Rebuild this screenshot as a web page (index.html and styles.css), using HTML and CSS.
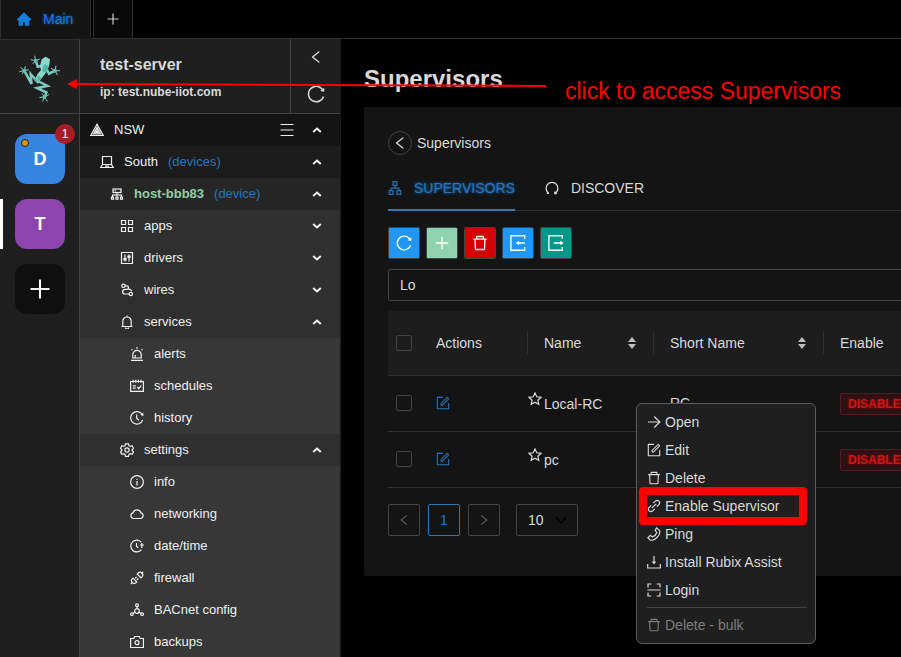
FILE: index.html
```html
<!DOCTYPE html>
<html lang="en">
<head>
<meta charset="utf-8">
<title>Supervisors</title>
<link rel="stylesheet" href="styles.css">
</head>
<body>
<svg class="sprite" aria-hidden="true">
  <symbol id="home" viewBox="64 64 896 896"><path fill="currentColor" d="M946.5 505L534.6 93.4a31.93 31.93 0 00-45.2 0L77.5 505c-12 12-18.8 28.3-18.8 45.3 0 35.3 28.7 64 64 64h43.4V908c0 17.7 14.3 32 32 32H448V716h112v224h265.9c17.7 0 32-14.3 32-32V614.3h43.4c17 0 33.3-6.7 45.3-18.8 24.9-25 24.9-65.5-.1-90.5z"/></symbol>
  <symbol id="plus" viewBox="0 0 14 14"><path d="M7 1.500v11M1.500 7h11"/></symbol>
  <symbol id="left" viewBox="64 64 896 896"><path fill="currentColor" d="M724 218.300V141c0-6.700-7.700-10.400-12.900-6.300L260.300 486.800a31.860 31.860 0 000 50.300l450.800 352.100c5.300 4.100 12.900.4 12.900-6.300v-77.300c0-4.900-2.300-9.600-6.100-12.600l-360-281 360-281.100c3.800-3 6.100-7.700 6.100-12.600z"/></symbol>
  <symbol id="reload" viewBox="64 64 896 896"><path fill="currentColor" d="M909.1 209.3l-56.4 44.1C775.8 155.1 656.2 92 521.9 92 290 92 102.3 279.5 102 511.5 101.7 743.7 289.8 932 521.9 932c181.3 0 335.8-115 394.6-276.1 1.5-4.2-.7-8.9-4.9-10.3l-56.7-19.5a8 8 0 00-10.1 4.8c-1.8 5-3.8 10-5.9 14.900-17.300 41-42.100 77.800-73.700 109.400A344.770 344.770 0 01655.900 829c-42.300 17.900-87.400 27-133.800 27-46.500 0-91.500-9.100-133.800-27A341.500 341.500 0 01279 755.200a342.160 342.160 0 01-73.700-109.400c-17.900-42.400-27-87.400-27-133.900s9.100-91.500 27-133.900c17.300-41 42.100-77.800 73.700-109.400 31.600-31.600 68.400-56.400 109.300-73.800 42.300-17.900 87.400-27 133.800-27 46.500 0 91.500 9.100 133.800 27a341.500 341.500 0 01109.300 73.800c9.900 9.900 19.200 20.400 27.800 31.400l-60.200 47a8 8 0 003 14.100l175.600 43c5 1.200 9.900-2.600 9.900-7.700l.8-180.900c-.1-6.600-7.800-10.300-13-6.200z"/></symbol>
  <symbol id="trash" viewBox="64 64 896 896"><path fill="currentColor" d="M360 184h-8c4.400 0 8-3.600 8-8v8h304v-8c0 4.400 3.600 8 8 8h-8v72h72v-80c0-35.300-28.700-64-64-64H352c-35.300 0-64 28.700-64 64v80h72v-72zm504 72H160c-17.700 0-32 14.300-32 32v32c0 4.400 3.600 8 8 8h60.400l24.700 523c1.600 34.100 29.800 61 63.900 61h454c34.200 0 62.300-26.800 63.900-61l24.700-523H888c4.400 0 8-3.600 8-8v-32c0-17.700-14.300-32-32-32zM731.300 840H292.700l-24.200-512h487l-24.200 512z"/></symbol>
  <symbol id="edit" viewBox="64 64 896 896"><path fill="currentColor" d="M904 512h-56c-4.400 0-8 3.600-8 8v320H184V184h320c4.400 0 8-3.600 8-8v-56c0-4.400-3.600-8-8-8H144c-17.700 0-32 14.300-32 32v736c0 17.700 14.300 32 32 32h736c17.700 0 32-14.300 32-32V520c0-4.400-3.600-8-8-8z"/><path fill="currentColor" d="M355.900 534.900L354 653.800c-.1 8.900 7.100 16.200 16 16.200h.4l118-2.900c2-.1 4-.9 5.400-2.300l415.900-415c3.100-3.100 3.100-8.200 0-11.300L785.400 114.300c-1.600-1.600-3.600-2.300-5.700-2.300s-4.100.8-5.700 2.300l-415.800 415a8.300 8.300 0 00-2.300 5.600zm63.500 23.600L779.700 199l45.200 45.100-360.500 359.700-45.700 1.100.7-46.400z"/></symbol>
  <symbol id="apartment" viewBox="64 64 896 896"><path fill="currentColor" d="M908 640H804V488c0-4.400-3.600-8-8-8H548v-96h108c8.800 0 16-7.200 16-16V80c0-8.800-7.200-16-16-16H368c-8.800 0-16 7.200-16 16v288c0 8.800 7.200 16 16 16h108v96H228c-4.400 0-8 3.600-8 8v152H116c-8.800 0-16 7.200-16 16v288c0 8.800 7.200 16 16 16h288c8.800 0 16-7.200 16-16V656c0-8.800-7.200-16-16-16H292v-88h440v88H620c-8.800 0-16 7.200-16 16v288c0 8.800 7.200 16 16 16h288c8.800 0 16-7.200 16-16V656c0-8.800-7.200-16-16-16zm-564 76v168H176V716h168zm84-408V140h168v168H428zm420 576H680V716h168v168z"/></symbol>
  <symbol id="cluster" viewBox="64 64 896 896"><path fill="currentColor" stroke="currentColor" stroke-width="14" fill-rule="evenodd" d="M888 680h-54V540H546v-92h238c8.800 0 16-7.200 16-16V168c0-8.800-7.200-16-16-16H240c-8.800 0-16 7.200-16 16v264c0 8.800 7.200 16 16 16h238v92H190v140h-54c-4.400 0-8 3.600-8 8v176c0 4.400 3.600 8 8 8h176c4.400 0 8-3.600 8-8V688c0-4.400-3.600-8-8-8h-54v-72h220v72h-54c-4.400 0-8 3.600-8 8v176c0 4.400 3.600 8 8 8h176c4.400 0 8-3.600 8-8V688c0-4.400-3.600-8-8-8h-54v-72h220v72h-54c-4.400 0-8 3.600-8 8v176c0 4.400 3.600 8 8 8h176c4.400 0 8-3.600 8-8V688c0-4.400-3.600-8-8-8zM256 808h-64v-64h64zM544 808h-64v-64h64zM832 808h-64v-64h64zM296 376V224h432v152zM370 268h70v64h-70z"/></symbol>
  <symbol id="pyramid" viewBox="0 0 14 14"><path d="M7 1.200L13.300 12.500H.7zM7 4.400L10.600 10.800H3.400zM7 7.200L8.300 9.500H5.700z"/></symbol>
  <symbol id="laptop" viewBox="0 0 14 14"><path d="M2.500 9.500v-8h9v8M2.500 9.500h9l1.800 3H.7zM5 11.200h4"/></symbol>
  <symbol id="apps" viewBox="0 0 14 14"><path d="M1.500 1.500h4v4h-4zM8.500 1.500h4v4h-4zM1.500 8.500h4v4h-4zM8.500 8.500h4v4h-4z"/></symbol>
  <symbol id="control" viewBox="0 0 14 14"><path d="M1.500 1.500h11v11h-11zM5 3.500v7M9 3.500v7"/><path fill="currentColor" d="M4 7.500h2v1.500H4zM8 5h2v1.500H8z"/></symbol>
  <symbol id="wires" viewBox="0 0 14 14"><circle cx="3.500" cy="2.800" r="1.700"/><circle cx="10.800" cy="11" r="1.700"/><path d="M5.200 2.800h1.500a1.800 1.800 0 010 3.600H4.900a2.300 2.300 0 000 4.600h4.200M8.500 6.400h1.300a1.500 1.500 0 011.500 2"/></symbol>
  <symbol id="bell" viewBox="0 0 14 14"><path d="M1.500 11.500h11M2.800 11.500V6.200a4.200 4.200 0 018.400 0v5.300M7 .4V2M5.500 12.600a1.500 1.500 0 003 0"/></symbol>
  <symbol id="alert" viewBox="0 0 14 14"><path d="M1 13.300h12M2.800 11V7.600a4.200 4.200 0 018.400 0V11zM5.200 11V8M7 0v1.700M1.500 2.200l1 1M12.500 2.200l-1 1"/></symbol>
  <symbol id="schedule" viewBox="0 0 14 14"><path d="M.6 2.500h12.800v9.900H.6zM3.200.7v3M5.800.7v3M8.400.7v3M11 .7v3M2.800 6.800h3M2.800 9.200h3M7.300 8l1.500 1.700 2.500-3.200"/></symbol>
  <symbol id="history" viewBox="0 0 14 14"><path d="M12.100 3.500A6.200 6.200 0 1012.700 9M6.700 3.600v3.900l2.300 1.700"/><path fill="currentColor" stroke="none" d="M13.400 1.500v3.400l-3-.8z"/></symbol>
  <symbol id="gear" viewBox="0 0 14 14"><path d="M5.500.8h3l.5 1.900 1.200.7 1.900-.6 1.400 2.500L12.100 6.700v.8l1.400 1.300-1.400 2.500-1.900-.6-1.200.7-.5 1.900h-3L5 11.400l-1.200-.7-1.900.6L.5 8.800l1.400-1.300v-.8L.5 5.300l1.400-2.500 1.900.6L5 2.700z"/><circle cx="7" cy="7" r="2.100"/></symbol>
  <symbol id="info" viewBox="0 0 14 14"><circle cx="7" cy="7" r="6.400"/><path d="M7 6.100v4.300M7 3.700v1.200"/></symbol>
  <symbol id="cloud" viewBox="0 0 14 14"><path d="M3.500 11.500a2.900 2.900 0 01-.4-5.700 4.100 4.100 0 017.800 0 2.900 2.900 0 01-.4 5.700z"/></symbol>
  <symbol id="clock" viewBox="0 0 14 14"><path d="M11.200 3.200a5.900 5.900 0 10.200 7.400M6.500 4v3.300l1.700 1.500M10 6H14M11.800 4v5"/></symbol>
  <symbol id="plug" viewBox="0 0 14 14"><path d="M.8 13.200l2-2M11.200 2.800l2-2M3 7.200l3.800 3.800-1.300 1a2.700 2.700 0 01-3.700-3.700zM7.200 3l3.800 3.800 1.200-1.200a2.700 2.700 0 00-3.800-3.800zM5.100 7.300l1.500-1.500M6.800 9l1.500-1.500"/></symbol>
  <symbol id="network" viewBox="0 0 14 14"><circle cx="7" cy="2.200" r="1.400"/><circle cx="1.900" cy="11.200" r="1.300"/><circle cx="12.100" cy="11.200" r="1.300"/><circle cx="7" cy="8" r="2.300"/><path d="M7 3.600v2M3 10.400l2-1.100M11 10.400l-2-1.100"/></symbol>
  <symbol id="camera" viewBox="0 0 14 14"><path d="M.6 3.500h3.200l.9-2h4.600l.9 2h3.200v9H.6z"/><circle cx="7" cy="7.700" r="2"/></symbol>
  <symbol id="up" viewBox="0 0 12 12"><path stroke-width="2" d="M2.200 8L6 4.500 9.800 8"/></symbol>
  <symbol id="down" viewBox="0 0 12 12"><path stroke-width="2" d="M2.200 4L6 7.500 9.800 4"/></symbol>
  <symbol id="bars" viewBox="0 0 14 14"><path d="M.5 1.500h13M.5 7h13M.5 12.500h13"/></symbol>
  <symbol id="redo" viewBox="0 0 14 14"><path stroke-width="1.300" d="M3.700 12.200a5.900 5.900 0 116.600 0M1.800 12.300h2.200M9.800 10.500v2h2"/></symbol>
  <symbol id="import" viewBox="0 0 14 14"><path d="M12.900 3.500V.7H.8v12.600h12.100v-2.800M6.500 7H13"/><path fill="currentColor" stroke="none" d="M5 7l3-2v4z"/></symbol>
  <symbol id="export" viewBox="0 0 14 14"><path d="M12.500 3.500V.7H.8v12.600h11.700v-2.800M5 7h6.500"/><path fill="currentColor" stroke="none" d="M13.800 7l-3-2v4z"/></symbol>
  <symbol id="star" viewBox="0 0 14 14"><path d="M7 .9l1.800 3.900 4.300.5-3.200 2.900.9 4.200L7 10.300l-3.800 2.100.9-4.200L.9 5.300l4.300-.5z"/></symbol>
  <symbol id="arrow" viewBox="0 0 14 14"><path d="M1 7h11.500M7.300 1.500L12.800 7l-5.500 5.500"/></symbol>
  <symbol id="link" viewBox="0 0 14 14"><path d="M6.300 4.200l2.300-2.300a2.500 2.500 0 013.500 3.500L9.800 7.700M7.700 9.800l-2.300 2.300a2.500 2.500 0 01-3.500-3.500l2.300-2.300M4.800 9.200l4.400-4.400"/></symbol>
  <symbol id="phone" viewBox="0 0 14 14"><path d="M9.600.9l3 2.700c.8 2.200-.6 5-2.900 7.200-2 1.900-4.600 2.800-6.600 2.200L.8 10.800l2.600-2.400 2 1.500c2.200-.8 3.800-2.400 4.400-4.400L8.200 3.300z"/></symbol>
  <symbol id="download" viewBox="0 0 14 14"><path d="M.7 9v4h12.600V9M7 .9V8"/><path fill="currentColor" stroke="none" d="M4.800 6.500h4.400L7 9.600z"/></symbol>
  <symbol id="scan" viewBox="0 0 14 14"><path d="M.5 7h13M1 4.500V1h3.300M9.700 1H13v3.500M1 9.500V13h3.300M9.700 13H13V9.500"/></symbol>
</svg>

<div class="app">
  <nav class="tabs" aria-label="Windows">
    <a class="tab tab-active" href="#main"><svg class="icon"><use href="#home"/></svg>Main</a>
    <button class="tab tab-add" aria-label="New tab"><svg class="icon"><use href="#plus"/></svg></button>
  </nav>

  <div class="body">
    <aside class="rail">
      <a class="logo" href="#supervisors" aria-label="Supervisors">
        <svg class="frog" viewBox="0 0 42 50">
          <g class="limbs"><path d="M16.700 6.700l2 6 5-1M36 16.700l-6 3-2-4M5.300 16.700L12.500 30l-.8-10 8 9"/><path d="M17 26l11.500 6L18 34l9.500 4.500-2 5"/></g>
          <path class="light" d="M22.700 5.300l4-2.600L31 5.300 30.300 11l-2.600 6.700-5 6.600-4 5L15.500 26l3-6 3.500-4-1-4z"/>
          <path class="mid" d="M25 10l5 2-3 7-4-2zM18.500 21l4 3-4 5zM14 25l3-1 1 5z"/>
          <g class="toes"><path d="M16.700 6.700l-1-5M16.700 6.700l-5-1M16.700 6.700l-3 3M16.700 6.700l4-1.700M5.300 16.700l-4-3.500M5.300 16.700l1-4.500M5.300 16.700l-5 1M5.300 16.700l4.500-1M5.300 16.700L3 20M36 16.700l1-5M36 16.700l5 0M36 16.700l2.500 4.500M36 16.700l-4-2.500M25.500 43l-5 .5M25.500 43l-2 4.500M25.500 43l3 4.500M25.500 43l4.500-2.500M25.500 43L23 39.500"/></g>
          <g class="palms"><circle cx="16.700" cy="6.700" r="2"/><circle cx="5.300" cy="16.700" r="2"/><circle cx="36" cy="16.700" r="2"/><circle cx="25.500" cy="43" r="2"/></g>
        </svg>
      </a>
      <div class="workspaces">
        <button class="space space-d">D<span class="dot"></span><span class="count">1</span></button>
        <button class="space space-t">T</button>
        <button class="space space-add" aria-label="Add workspace"><svg><use href="#plus"/></svg></button>
      </div>
    </aside>

    <aside class="sidebar">
      <header class="server">
        <div class="server-name"><h2>test-server</h2><p>ip: test.nube-iiot.com</p></div>
        <div class="server-tools">
          <button aria-label="Collapse"><svg class="icon"><use href="#left"/></svg></button>
          <button aria-label="Reload"><svg class="icon large"><use href="#reload"/></svg></button>
        </div>
      </header>
      <nav class="tree" aria-label="Devices">
        <a class="node l0" href="#nsw"><svg class="icon"><use href="#pyramid"/></svg><span>NSW</span><svg class="icon list"><use href="#bars"/></svg><svg class="chevron"><use href="#up"/></svg></a>
        <a class="node l1" href="#south"><svg class="icon"><use href="#laptop"/></svg><span>South</span><small>(devices)</small><svg class="chevron"><use href="#up"/></svg></a>
        <a class="node l2" href="#host"><svg class="icon"><use href="#cluster"/></svg><b>host-bbb83</b><small>(device)</small><svg class="chevron"><use href="#up"/></svg></a>
        <a class="node l3" href="#apps"><svg class="icon"><use href="#apps"/></svg><span>apps</span><svg class="chevron"><use href="#down"/></svg></a>
        <a class="node l3" href="#drivers"><svg class="icon"><use href="#control"/></svg><span>drivers</span><svg class="chevron"><use href="#down"/></svg></a>
        <a class="node l3" href="#wires"><svg class="icon"><use href="#wires"/></svg><span>wires</span><svg class="chevron"><use href="#down"/></svg></a>
        <a class="node l3" href="#services"><svg class="icon"><use href="#bell"/></svg><span>services</span><svg class="chevron"><use href="#up"/></svg></a>
        <a class="node l4" href="#alerts"><svg class="icon"><use href="#alert"/></svg><span>alerts</span></a>
        <a class="node l4" href="#schedules"><svg class="icon"><use href="#schedule"/></svg><span>schedules</span></a>
        <a class="node l4" href="#history"><svg class="icon"><use href="#history"/></svg><span>history</span></a>
        <a class="node l3" href="#settings"><svg class="icon"><use href="#gear"/></svg><span>settings</span><svg class="chevron"><use href="#up"/></svg></a>
        <a class="node l4" href="#info"><svg class="icon"><use href="#info"/></svg><span>info</span></a>
        <a class="node l4" href="#networking"><svg class="icon"><use href="#cloud"/></svg><span>networking</span></a>
        <a class="node l4" href="#datetime"><svg class="icon"><use href="#clock"/></svg><span>date/time</span></a>
        <a class="node l4" href="#firewall"><svg class="icon"><use href="#plug"/></svg><span>firewall</span></a>
        <a class="node l4" href="#bacnet"><svg class="icon"><use href="#network"/></svg><span>BACnet config</span></a>
        <a class="node l4" href="#backups"><svg class="icon"><use href="#camera"/></svg><span>backups</span></a>
      </nav>
    </aside>

    <main class="main">
      <h1>Supervisors</h1>
      <section class="card">
        <div class="back"><button aria-label="Back"><svg class="icon"><use href="#left"/></svg></button>Supervisors</div>
        <div class="views">
          <a class="view view-active" href="#list"><svg class="icon"><use href="#apartment"/></svg>SUPERVISORS</a>
          <a class="view" href="#discover"><svg class="icon"><use href="#redo"/></svg>DISCOVER</a>
        </div>
        <div class="actions">
          <button class="blue" aria-label="Refresh"><svg class="icon"><use href="#reload"/></svg></button>
          <button class="green" aria-label="Add"><svg class="icon"><use href="#plus"/></svg></button>
          <button class="red" aria-label="Delete"><svg class="icon"><use href="#trash"/></svg></button>
          <button class="blue" aria-label="Import"><svg class="icon"><use href="#import"/></svg></button>
          <button class="teal" aria-label="Export"><svg class="icon"><use href="#export"/></svg></button>
        </div>
        <input class="search" type="text" value="Lo" aria-label="Search supervisors">
        <table>
          <colgroup><col class="c-check"><col class="c-actions"><col class="c-name"><col class="c-short"><col></colgroup>
          <thead><tr>
            <th class="check"><input type="checkbox" aria-label="Select all"></th>
            <th><div class="head">Actions</div></th>
            <th><div class="head">Name<svg class="sorter" viewBox="0 0 8 12"><path d="M4 0l4 5H0zM4 12l4-5H0z"/></svg></div></th>
            <th><div class="head">Short Name<svg class="sorter" viewBox="0 0 8 12"><path d="M4 0l4 5H0zM4 12l4-5H0z"/></svg></div></th>
            <th><div class="head">Enable</div></th>
          </tr></thead>
          <tbody>
            <tr>
              <td class="check"><input type="checkbox" aria-label="Select Local-RC"></td>
              <td><button class="row-edit" aria-label="Edit Local-RC"><svg class="icon"><use href="#edit"/></svg></button></td>
              <td class="name"><div><svg class="icon"><use href="#star"/></svg><span>Local-RC</span></div></td>
              <td>RC</td>
              <td><span class="tag">DISABLED</span></td>
            </tr>
            <tr>
              <td class="check"><input type="checkbox" aria-label="Select pc"></td>
              <td><button class="row-edit" aria-label="Edit pc"><svg class="icon"><use href="#edit"/></svg></button></td>
              <td class="name"><div><svg class="icon"><use href="#star"/></svg><span>pc</span></div></td>
              <td></td>
              <td><span class="tag">DISABLED</span></td>
            </tr>
          </tbody>
        </table>
        <div class="pages">
          <button class="page" aria-label="Previous"><svg class="small"><use href="#left"/></svg></button>
          <button class="page page-active">1</button>
          <button class="page" aria-label="Next"><svg class="small flip"><use href="#left"/></svg></button>
          <div class="size"><select aria-label="Rows per page"><option>10</option></select><svg class="size-arrow" viewBox="0 0 12 12"><path d="M1 3l5 6 5-6"/></svg></div>
        </div>
      </section>
    </main>
  </div>

  <div class="menu" role="menu">
    <button role="menuitem"><svg class="icon"><use href="#arrow"/></svg>Open</button>
    <button role="menuitem"><svg class="icon"><use href="#edit"/></svg>Edit</button>
    <button role="menuitem"><svg class="icon"><use href="#trash"/></svg>Delete</button>
    <button role="menuitem"><svg class="icon"><use href="#link"/></svg>Enable Supervisor</button>
    <button role="menuitem"><svg class="icon"><use href="#phone"/></svg>Ping</button>
    <button role="menuitem"><svg class="icon"><use href="#download"/></svg>Install Rubix Assist</button>
    <button role="menuitem"><svg class="icon"><use href="#scan"/></svg>Login</button>
    <hr>
    <button role="menuitem" disabled><svg class="icon"><use href="#trash"/></svg>Delete - bulk</button>
  </div>

  <svg class="pointer" viewBox="0 0 480 12"><path class="shaft" d="M9 5L479 7"/><path class="tip" d="M0 5L10 0V10z"/></svg>
  <p class="note">click to access Supervisors</p>
  <div class="highlight"></div>
</div>
</body>
</html>
```
FILE: styles.css
```css
* { box-sizing: border-box; }
body {
  margin: 0;
  background: #000;
  color: #dadada;
  font: 14px/22px "Liberation Sans", Arial, sans-serif;
}
h1, h2, p { margin: 0; }
a { color: inherit; text-decoration: none; }
button { margin: 0; padding: 0; border: 0; background: none; color: inherit; font: inherit; }
svg { display: block; flex: none; fill: none; stroke: currentColor; stroke-width: 1.2; }
.sprite { position: absolute; width: 0; height: 0; }
.icon { width: 14px; height: 14px; }
.large { width: 18px; height: 18px; }
.small { width: 12px; height: 12px; }

.app { position: relative; display: flex; flex-direction: column; height: 100vh; overflow: hidden; }

/* window tabs */
.tabs { display: flex; gap: 2px; height: 39px; flex: none; box-shadow: inset 0 -1px #303030; }
.tab { display: flex; align-items: center; justify-content: center; border: 1px solid #303030; border-top: 0; }
.tab-active {
  gap: 12px;
  padding: 0 17px 0 16px;
  border-bottom-color: #141414;
  background: #141414;
  color: #177ddc;
  text-shadow: 0 0 3px rgba(23, 125, 220, 0.7);
}
.tab-add { width: 40px; background: #0a0a0a; color: #ccc; }

.body { display: flex; flex: 1; min-height: 0; }

/* workspace rail */
.rail { width: 80px; flex: none; background: #1f1f1f; border-right: 1px solid #434343; }
.logo { display: flex; align-items: center; justify-content: center; height: 75px; padding-top: 4px; border-bottom: 1px solid #434343; border-top: 1px solid #303030; }
.frog { width: 42px; height: 50px; }
.limbs { stroke: #79c9bf; stroke-width: 2.5; }
.toes { stroke: #7dcdc3; stroke-width: 1; }
.palms { fill: #5fbdb1; stroke: none; }
.light { fill: #8fd8ce; stroke: none; }
.mid { fill: #4fb5a9; stroke: none; }
.workspaces { display: flex; flex-direction: column; gap: 15px; padding: 20px 15px; }
.space {
  position: relative;
  display: flex;
  align-items: center;
  justify-content: center;
  width: 50px;
  height: 50px;
  border-radius: 12px;
  color: #fff;
  font-size: 18px;
  font-weight: bold;
}
.space svg { width: 24px; height: 24px; }
.space-d { background: #3584e0; }
.space-t { background: #8e44ad; }
.space-t::before { content: ""; position: absolute; left: -15px; width: 3px; height: 50px; background: #fff; }
.space-add { background: #0f0f0f; }
.dot { position: absolute; left: 6px; top: 5px; width: 8px; height: 8px; border: 1px solid #222; border-radius: 50%; background: #d89614; }
.count { position: absolute; right: -10px; top: -10px; width: 20px; height: 20px; border-radius: 50%; background: #a61d24; font: 12px/20px "Liberation Sans", Arial, sans-serif; }

/* device tree */
.sidebar { width: 260px; flex: none; background: #373737; }
.server { display: flex; height: 75px; background: #1f1f1f; border-bottom: 1px solid #434343; }
.server-name { display: flex; flex: 1; flex-direction: column; justify-content: center; gap: 6px; padding: 4px 0 0 20px; }
.server-name h2 { font-size: 16px; line-height: 22px; }
.server-name p { font-size: 12px; line-height: 20px; font-weight: bold; }
.server-tools { display: flex; flex-direction: column; align-items: center; justify-content: space-between; width: 50px; padding: 11px 0 10px; border-left: 1px solid #434343; }
.node { display: flex; align-items: center; gap: 10px; height: 32px; padding-right: 17px; color: #f0f0f0; font-size: 13px; }
.node small { margin-right: auto; color: #2775bb; font-size: 13px; }
.node b { color: #8fd0ab; }
.node .chevron { width: 12px; height: 12px; margin-left: auto; }
.node .list { margin-left: auto; }
.node .list + .chevron { margin-left: 7px; }
.l0 { padding-left: 10px; background: #141414; }
.l1 { padding-left: 20px; background: #1c1c1c; }
.l2 { padding-left: 30px; background: #262626; }
.l3 { padding-left: 40px; background: #2f2f2f; }
.l4 { padding-left: 50px; background: #373737; }

/* page */
.main { flex: 1; min-width: 0; overflow: hidden; padding: 24px; box-shadow: inset 1px 0 #1d1d1d; }
.main h1 { margin-bottom: 12px; font-size: 24px; line-height: 32px; }
.card { min-width: 720px; padding: 24px 24px 40px; border-radius: 2px; background: #141414; }
.back { display: flex; align-items: center; gap: 5px; }
.back button { display: flex; align-items: center; justify-content: center; width: 24px; height: 24px; border: 1px solid #434343; border-radius: 50%; }
.views { display: flex; gap: 30px; height: 56px; margin-bottom: 16px; box-shadow: inset 0 -1px #303030; }
.view { display: flex; align-items: center; gap: 12px; padding-top: 10px; }
.view-active { border-bottom: 2px solid #3477b6; padding-top: 12px; color: #2775bb; text-shadow: 0 0 3px #177ddc; }
.actions { display: flex; gap: 6px; margin-bottom: 10px; }
.actions button { display: flex; align-items: center; justify-content: center; width: 32px; height: 32px; border: 1px solid #434343; border-radius: 2px; color: #fff; }
.actions .icon { width: 16px; height: 16px; }
.blue { background: #2196f3; }
.green { background: #8fd3ae; }
.red { background: #d50000; }
.teal { background: #009688; }
.search { display: block; width: 100%; height: 32px; margin: 0 0 10px; padding: 0 11px; border: 1px solid #434343; border-radius: 2px; background: transparent; color: inherit; font: inherit; }

table { width: 100%; table-layout: fixed; border-collapse: separate; border-spacing: 0; }
.c-check { width: 32px; }
.c-actions { width: 108px; }
.c-name { width: 126px; }
.c-short { width: 170px; }
th, td { padding: 0 16px; border-bottom: 1px solid #303030; text-align: left; font-weight: normal; }
th { height: 65px; background: #1d1d1d; }
th:not(.check) { padding-right: 0; }
td { height: 56px; }
td:not(:last-child) { padding-bottom: 2px; }
.check { padding: 0 8px; }
.check input { display: block; appearance: none; width: 16px; height: 16px; margin: 0; border: 1px solid #434343; border-radius: 2px; }
.head { display: flex; align-items: center; justify-content: space-between; padding-right: 17px; border-right: 1px solid #303030; }
.sorter { width: 8px; height: 12px; fill: #bfbfbf; stroke: none; }
.row-edit { display: block; color: #2775bb; }
.name { padding: 0; }
.name div { display: flex; gap: 2px; }
.name .icon { margin-top: 1px; }
.name span { padding-top: 2px; }
.tag { display: inline-block; padding: 0 7px; border: 1px solid #58181c; border-radius: 2px; background: #2a1215; color: #d01414; font-size: 12px; line-height: 20px; font-weight: bold; text-shadow: 0 0 3px #a00; }

.pages { display: flex; gap: 8px; margin-top: 16px; }
.page { display: flex; align-items: center; justify-content: center; width: 32px; height: 32px; border: 1px solid #434343; border-radius: 2px; color: #606060; }
.page-active { border-color: #3477b6; color: #2775bb; }
.flip { transform: scaleX(-1); }
.size { position: relative; margin-left: 8px; }
.size select { display: block; appearance: none; width: 62px; height: 32px; padding: 0 11px; border: 1px solid #434343; border-radius: 2px; background: transparent; color: inherit; font: inherit; }
.size-arrow { position: absolute; right: 11px; top: 10px; width: 12px; height: 12px; stroke: #000; }

/* context menu over the table */
.menu { position: absolute; left: 636px; top: 403px; width: 180px; padding: 4px 8px 4px 10px; border: 1px solid #5c5c5c; border-radius: 6px; background: #1f1f1f; }
.menu button { display: flex; align-items: center; gap: 4px; width: 100%; height: 28px; white-space: nowrap; }
.menu button:disabled { color: #7c7c7c; }
.menu hr { height: 1px; margin: 3px 0; border: 0; background: #434343; }

/* guide marks over the page */
.pointer { position: absolute; left: 67px; top: 79px; width: 480px; height: 12px; }
.shaft { stroke: #f00; stroke-width: 2; }
.tip { fill: #f00; stroke: none; }
.note { position: absolute; left: 565px; top: 77px; color: #f00; font-size: 23px; line-height: 28px; white-space: nowrap; }
.highlight { position: absolute; left: 639px; top: 487px; width: 168px; height: 38px; border: 8px solid #f00; border-radius: 4px; }
```
